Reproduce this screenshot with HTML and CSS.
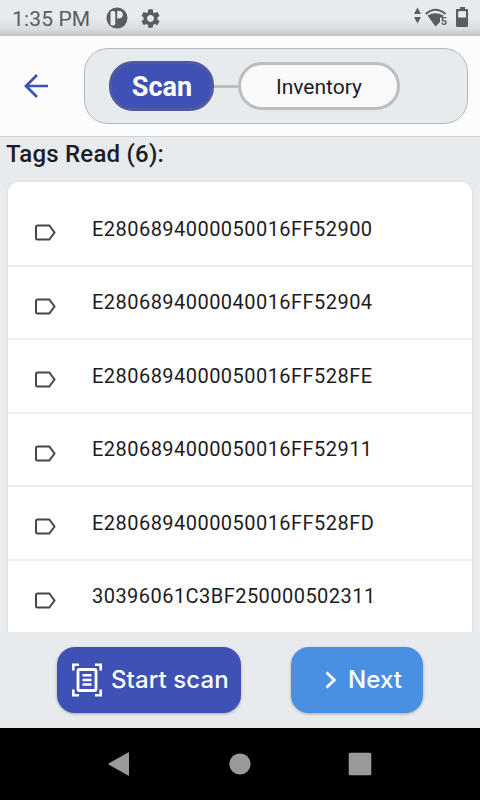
FILE: index.html
```html
<!DOCTYPE html>
<html lang="en">
<head>
    <meta charset="UTF-8">
    <meta name="viewport" content="width=device-width, initial-scale=1.0">
    <title>Scan</title>
    <link rel="stylesheet" href="styles.css">
</head>
<body>
    <div class="screen">
        <div class="status-bar">
            <div class="clock">1:35 PM</div>
            <svg class="app-icon" width="22" height="22" viewBox="0 0 22 22">
                <circle cx="11" cy="11" r="10.5" fill="#5a5c5e"/>
                <rect x="4.500" y="4" width="4.800" height="14.500" rx="1.800" fill="#e7ebee"/>
                <path d="M11.200 4H13.500Q16.800 4 16.800 7.500T13.500 11.500H11.200Z" fill="#e7ebee"/>
            </svg>
            <svg class="gear" width="23" height="23" viewBox="0 0 24 24">
                <path fill="#5a5c5e" d="M19.140 12.940c.04-.3.06-.61.06-.94s-.02-.64-.07-.94l2.030-1.580c.18-.14.23-.41.12-.61l-1.920-3.320c-.12-.22-.37-.29-.59-.22l-2.390.96c-.5-.38-1.030-.7-1.620-.94l-.36-2.540c-.04-.24-.24-.41-.48-.41h-3.840c-.24 0-.43.17-.47.41l-.36 2.540c-.59.24-1.130.57-1.620.94l-2.390-.96c-.22-.08-.47 0-.59.22L2.740 8.870c-.12.21-.08.47.12.61l2.030 1.580c-.05.3-.09.63-.09.94s.02.64.07.94l-2.030 1.580c-.18.14-.23.41-.12.61l1.920 3.320c.12.22.37.29.59.22l2.390-.96c.5.38 1.030.7 1.620.94l.36 2.540c.05.24.24.41.48.41h3.840c.24 0 .44-.17.47-.41l.36-2.540c.59-.24 1.130-.56 1.620-.94l2.390.96c.22.08.47 0 .59-.22l1.920-3.320c.12-.22.07-.47-.12-.61l-2.010-1.580zM12 15.600c-1.980 0-3.600-1.620-3.600-3.600s1.620-3.600 3.600-3.600 3.600 1.620 3.600 3.600-1.620 3.600-3.600 3.600z"/>
            </svg>
            <svg class="signals" width="56" height="24" viewBox="0 0 56 24">
                <g fill="#5a5c5e">
                    <path d="M4.500 1.500L8 8H1ZM4.500 17.500L8 11H1Z"/>
                    <path d="M14.500 9.500Q22.500 5 30.500 9.500L29.500 11.500H27V16L22.500 20.500Z"/>
                    <path d="M12.800 8Q22.500 -.5 32.500 8" fill="none" stroke="#5a5c5e" stroke-width="1.900"/>
                    <path d="M47 1h5v2h2.200q.8 0 .8.800V20q0 1-.9 1H44q-1 0-1-1V3.800q0-.8.8-.8H47Z"/>
                </g>
                <path d="M45.200 5.200H53V11.500H45.200Z" fill="#e7ebee"/>
                <text class="wifi-band" x="27.800" y="19">5</text>
            </svg>
        </div>

        <div class="header">
            <svg class="back" width="26" height="26" viewBox="0 0 26 26">
                <path d="M25 13H3.500M14 2L3 13L14 24" fill="none" stroke="#3f51b5" stroke-width="2.700"/>
            </svg>
            <div class="stepper">
                <div class="step active">Scan</div>
                <div class="line"></div>
                <div class="step">Inventory</div>
            </div>
        </div>

        <div class="content">
            <h1>Tags Read (6):</h1>
            <ul class="tags">
                <li><svg class="tag" viewBox="0 0 22 17"><path d="M3.500 1.500H15.300L20.500 8.500L15.300 15.500H3.500Q2 15.500 2 14V3Q2 1.500 3.500 1.500Z"/></svg><span>E2806894000050016FF52900</span></li>
                <li><svg class="tag" viewBox="0 0 22 17"><path d="M3.500 1.500H15.300L20.500 8.500L15.300 15.500H3.500Q2 15.500 2 14V3Q2 1.500 3.500 1.500Z"/></svg><span>E2806894000040016FF52904</span></li>
                <li><svg class="tag" viewBox="0 0 22 17"><path d="M3.500 1.500H15.300L20.500 8.500L15.300 15.500H3.500Q2 15.500 2 14V3Q2 1.500 3.500 1.500Z"/></svg><span>E2806894000050016FF528FE</span></li>
                <li><svg class="tag" viewBox="0 0 22 17"><path d="M3.500 1.500H15.300L20.500 8.500L15.300 15.500H3.500Q2 15.500 2 14V3Q2 1.500 3.500 1.500Z"/></svg><span>E2806894000050016FF52911</span></li>
                <li><svg class="tag" viewBox="0 0 22 17"><path d="M3.500 1.500H15.300L20.500 8.500L15.300 15.500H3.500Q2 15.500 2 14V3Q2 1.500 3.500 1.500Z"/></svg><span>E2806894000050016FF528FD</span></li>
                <li><svg class="tag" viewBox="0 0 22 17"><path d="M3.500 1.500H15.300L20.500 8.500L15.300 15.500H3.500Q2 15.500 2 14V3Q2 1.500 3.500 1.500Z"/></svg><span>30396061C3BF250000502311</span></li>
            </ul>
        </div>

        <div class="actions">
            <button class="btn start">
                <svg width="30" height="34" viewBox="0 0 30 34" fill="none" stroke="#fff">
                    <path d="M1.300 7.500V1.700H7M23 1.700H28.700V7.500M1.300 26.500V32.300H7M23 32.300H28.700V26.500" stroke-width="2.600"/>
                    <rect x="6" y="6.500" width="18" height="21" rx="1.500" stroke-width="2.800"/>
                    <path d="M10.500 12.300H19.500M10.500 17H19.500M10.500 21.500H19.500" stroke-width="2.400"/>
                </svg>
                <span>Start scan</span>
            </button>
            <button class="btn next">
                <svg width="12" height="18" viewBox="0 0 12 18">
                    <path d="M1.500 1.500L9.300 9L1.500 16.500" fill="none" stroke="#fff" stroke-width="2.800"/>
                </svg>
                <span>Next</span>
            </button>
        </div>

        <div class="nav-bar">
            <svg width="22" height="26" viewBox="0 0 22 26"><path d="M20 1.500Q21 1 21 2V24Q21 25 20 24.500L1 13.800Q0 13 1 12.200Z" fill="#999"/></svg>
            <svg width="22" height="22" viewBox="0 0 22 22"><circle cx="11" cy="11" r="10.600" fill="#999"/></svg>
            <svg width="24" height="24" viewBox="0 0 24 24"><rect x=".7" y=".7" width="22.600" height="22.600" rx="1.500" fill="#999"/></svg>
        </div>
    </div>
</body>
</html>
```
FILE: styles.css
```css
* {
    margin: 0;
    padding: 0;
    box-sizing: border-box;
}
body {
    font-family: Roboto, "Liberation Sans", sans-serif;
    background-color: #e7ebee;
}
.screen {
    width: 480px;
    height: 800px;
    display: flex;
    flex-direction: column;
    overflow: hidden;
}
.status-bar {
    height: 36px;
    display: flex;
    align-items: center;
    padding: 1px 11px 0 12px;
    color: #5a5c5e;
    background: linear-gradient(#e7ebee 50%, #d9dcdf 82%, #bfc2c4);
}
.clock {
    width: 94px;
    font-size: 21px;
    letter-spacing: 0.15px;
    white-space: nowrap;
}
.app-icon {
    margin-top: -1px;
}
.gear {
    margin-left: 11px;
    margin-top: -1px;
}
.signals {
    margin-left: auto;
    margin-top: -2px;
}
.wifi-band {
    font-size: 11px;
    font-weight: 700;
    fill: #5a5c5e;
}
.header {
    height: 101px;
    display: flex;
    align-items: center;
    padding: 0 12px 0 23px;
    background-color: #fcfcfc;
    border-bottom: 1px solid #d0d3d6;
}
.stepper {
    flex: 1;
    height: 76px;
    margin-left: 35px;
    padding-left: 24px;
    display: flex;
    align-items: center;
    background-color: #e7ebee;
    border: 1px solid #b4b7b8;
    border-radius: 24px;
}
.step {
    width: 162px;
    height: 48px;
    padding-top: 1px;
    display: flex;
    align-items: center;
    justify-content: center;
    font-size: 21px;
    color: #1c1b22;
    background-color: #f9fafc;
    border: 3px solid #bdbdbd;
    border-radius: 24px;
}
.step.active {
    width: 105px;
    height: 50px;
    padding-left: 1px;
    font-size: 27px;
    font-weight: 700;
    color: #fff;
    background-color: #3f51b5;
    border-color: #505b9e;
}
.line {
    width: 24px;
    height: 3px;
    background-color: #bdbdbd;
}
.content {
    height: 495px;
    padding: 0 6px;
    overflow: hidden;
}
h1 {
    height: 43px;
    line-height: 34px;
    font-size: 24px;
    font-weight: 500;
    letter-spacing: 0.22px;
    color: #1c1b1f;
}
.tags {
    height: 470px;
    padding-top: 11px;
    list-style: none;
    background-color: #fff;
    border: 2px solid #e3e4e5;
    border-radius: 13px;
}
.tags li {
    height: 73.5px;
    padding: 0 26px;
    display: flex;
    align-items: center;
    border-bottom: 2px solid #efeff0;
}
.tags span {
    margin-left: 36px;
    font-size: 20px;
    letter-spacing: 0.46px;
    color: #1c1b1f;
}
.tag {
    width: 22px;
    height: 17px;
    margin-top: 8px;
    fill: none;
    stroke: #49454f;
    stroke-width: 2;
}
.actions {
    height: 96px;
    display: flex;
    align-items: center;
    padding: 0 57px;
    justify-content: space-between;
}
.btn {
    height: 66px;
    display: flex;
    align-items: center;
    font-family: Inter, sans-serif;
    font-size: 24px;
    font-weight: 500;
    letter-spacing: 0.1px;
    color: #fff;
    border: none;
    border-radius: 18px;
    box-shadow: 0 1px 3px rgba(0, 0, 0, 0.3);
}
.btn span {
    margin-top: -1px;
}
.start {
    width: 184px;
    padding-left: 15px;
    gap: 9px;
    background-color: #3f51b5;
}
.next {
    width: 132px;
    padding-left: 34px;
    gap: 11px;
    background-color: #4990e2;
}
.nav-bar {
    height: 72px;
    display: flex;
    align-items: center;
    justify-content: space-between;
    padding: 0 108px;
    background-color: #000;
}
.nav-bar svg:nth-child(2) {
    margin-left: 2px;
}
```
